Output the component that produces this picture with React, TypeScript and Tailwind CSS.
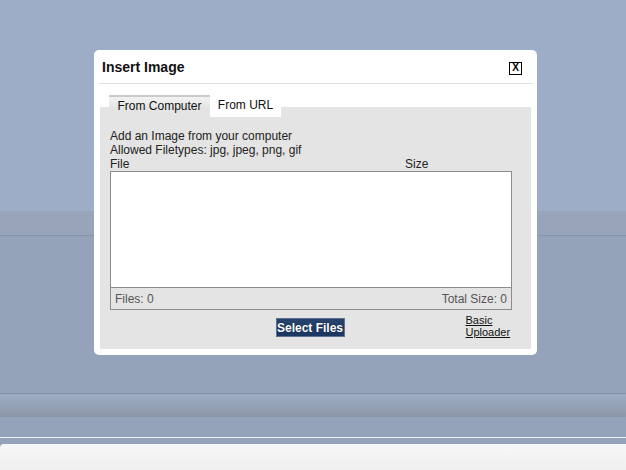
export default function App() {
  return (
    <div className="relative w-[626px] h-[470px] overflow-hidden bg-[#94a3ba] font-['Liberation_Sans',Arial,sans-serif] text-[12px] text-[#222]">
      {/* page behind the overlay */}
      <div className="flex flex-col">
        <div className="h-[211px] bg-[#9eadc7]" />
        <div className="h-[24px] bg-[#97a4ba]" />
        <div className="h-px bg-[#8795a9]" />
        <div className="h-[157px] bg-[#95a3ba]" />
        <div className="h-px bg-[#8592a5]" />
        <div className="h-[23px] bg-gradient-to-b from-[#9eadc6] to-[#8c97a8]" />
        <div className="h-[20px] bg-[#94a3ba]" />
        <div className="h-px bg-[#eef1f5]" />
        <div className="h-[6px] bg-[#94a3ba]" />
        <div className="h-[26px] rounded-tl-[4px] bg-gradient-to-b from-[#f7f7f8] to-[#efefef]" />
      </div>

      {/* dialog */}
      <div className="absolute left-[94px] top-[50px] w-[443px] h-[305px] rounded-[5px] bg-white flex flex-col">
        <div className="h-[33px] flex items-center justify-between pl-[8px] pr-[15px]">
          <span className="text-[14px] font-bold text-[#111] pt-[1px]">Insert Image</span>
          <button className="w-[13px] h-[13px] mt-[3px] border border-black flex items-center justify-center text-[10px] leading-none text-black font-bold">
            X
          </button>
        </div>
        <div className="mx-[4px] h-px bg-[#e3e3e3]" />

        <div className="px-[6px] pt-[11px]">
          <div className="relative z-10 flex ml-[9px] h-[22px]">
            <div className="w-[101px] h-[12px] border-t-2 border-[#cacaca] bg-gradient-to-b from-[#f2f2f2] to-[#e6e6e6] flex justify-center">
              <span className="leading-[19px] text-[#111]">From Computer</span>
            </div>
            <div className="w-[71px] h-[22px] bg-white flex justify-center">
              <span className="leading-[21px] text-[#111]">From URL</span>
            </div>
          </div>

          <div className="-mt-[10px] h-[242px] bg-[#e4e4e4] pl-[10px] pt-[22px]">
            <div className="leading-[14px]">Add an Image from your computer</div>
            <div className="leading-[14px]">Allowed Filetypes: jpg, jpeg, png, gif</div>
            <div className="flex leading-[14px] w-[402px]">
              <span className="w-[295px]">File</span>
              <span>Size</span>
            </div>
            <div className="w-[402px] border border-[#8c8c8c]">
              <div className="h-[115px] bg-white" />
              <div className="h-[22px] border-t border-[#8c8c8c] flex items-center justify-between px-[4px] text-[#555]">
                <span>Files: 0</span>
                <span>Total Size: 0</span>
              </div>
            </div>
            <div className="w-[402px] grid grid-cols-[1fr_auto_1fr] mt-[4px]">
              <div />
              <button className="mt-[4px] -ml-[2px] w-[69px] h-[19px] bg-gradient-to-b from-[#26436d] to-[#1b3660] border border-[#5d7090] text-white font-bold text-[12px] leading-none [text-shadow:0_0_1px_#0a1a33]">
                Select Files
              </button>
              <div className="pl-[121px] flex flex-col text-[11px] leading-[12px] text-[#111] underline">
                <span>Basic</span>
                <span>Uploader</span>
              </div>
            </div>
          </div>
        </div>
      </div>
    </div>
  );
}
